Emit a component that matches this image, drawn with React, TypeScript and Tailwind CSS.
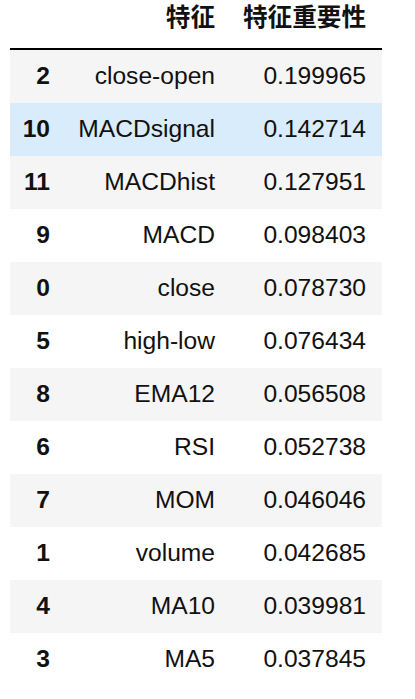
const rows: [string, string, string][] = [
  ['2', 'close-open', '0.199965'],
  ['10', 'MACDsignal', '0.142714'],
  ['11', 'MACDhist', '0.127951'],
  ['9', 'MACD', '0.098403'],
  ['0', 'close', '0.078730'],
  ['5', 'high-low', '0.076434'],
  ['8', 'EMA12', '0.056508'],
  ['6', 'RSI', '0.052738'],
  ['7', 'MOM', '0.046046'],
  ['1', 'volume', '0.042685'],
  ['4', 'MA10', '0.039981'],
  ['3', 'MA5', '0.037845'],
];

export default function App() {
  return (
    <div
      className="min-h-[699px] bg-white pl-[10px] text-[#111]"
      style={{ fontFamily: '"Liberation Sans", Arial, "Noto Sans CJK SC", sans-serif' }}
    >
      <div className="w-[372px] text-[24.6px]">
        {/* Header */}
        <div className="grid h-[50px] grid-cols-[56px_165px_151px] items-end border-b-2 border-black pb-[13px] font-bold">
          <div />
          <div className="pr-4 text-right">特征</div>
          <div className="pr-4 text-right">特征重要性</div>
        </div>

        {/* Rows */}
        {rows.map(([idx, name, val], i) => (
          <div
            key={idx}
            className={`grid h-[53px] grid-cols-[56px_165px_151px] items-center ${
              i === 1 ? 'bg-[#d9ecfb]' : i % 2 === 0 ? 'bg-[#f5f5f5]' : 'bg-white'
            }`}
          >
            <div className="pr-4 text-right font-bold">{idx}</div>
            <div className="pr-4 text-right">{name}</div>
            <div className="pr-4 text-right">{val}</div>
          </div>
        ))}
      </div>
    </div>
  );
}
